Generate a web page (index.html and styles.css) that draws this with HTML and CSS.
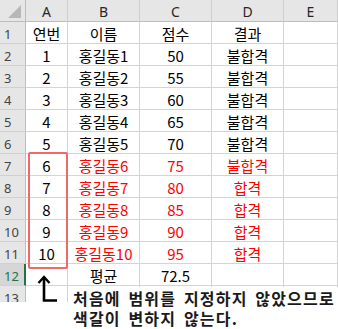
FILE: index.html
```html
<!DOCTYPE html>
<html lang="ko">
<head>
<meta charset="utf-8">
<link rel="stylesheet" href="styles.css">
</head>
<body>
<div class="page">
  <div class="sheet">
    <div class="corner"><span class="tri"></span></div>
    <div class="ch">A</div><div class="ch">B</div><div class="ch">C</div><div class="ch">D</div><div class="ch">E</div>

    <div class="rh">1</div><div class="c">연번</div><div class="c">이름</div><div class="c">점수</div><div class="c">결과</div><div class="c"></div>
    <div class="rh">2</div><div class="c">1</div><div class="c">홍길동1</div><div class="c">50</div><div class="c">불합격</div><div class="c"></div>
    <div class="rh">3</div><div class="c">2</div><div class="c">홍길동2</div><div class="c">55</div><div class="c">불합격</div><div class="c"></div>
    <div class="rh">4</div><div class="c">3</div><div class="c">홍길동3</div><div class="c">60</div><div class="c">불합격</div><div class="c"></div>
    <div class="rh">5</div><div class="c">4</div><div class="c">홍길동4</div><div class="c">65</div><div class="c">불합격</div><div class="c"></div>
    <div class="rh">6</div><div class="c">5</div><div class="c">홍길동5</div><div class="c">70</div><div class="c">불합격</div><div class="c"></div>
    <div class="rh">7</div><div class="c">6</div><div class="c red">홍길동6</div><div class="c red">75</div><div class="c red">불합격</div><div class="c"></div>
    <div class="rh">8</div><div class="c">7</div><div class="c red">홍길동7</div><div class="c red">80</div><div class="c red">합격</div><div class="c"></div>
    <div class="rh">9</div><div class="c">8</div><div class="c red">홍길동8</div><div class="c red">85</div><div class="c red">합격</div><div class="c"></div>
    <div class="rh">10</div><div class="c">9</div><div class="c red">홍길동9</div><div class="c red">90</div><div class="c red">합격</div><div class="c"></div>
    <div class="rh">11</div><div class="c">10</div><div class="c red">홍길동10</div><div class="c red">95</div><div class="c red">합격</div><div class="c"></div>
    <div class="rh active">12</div><div class="c"></div><div class="c">평균</div><div class="c">72.5</div><div class="c"></div><div class="c"></div>
    <div class="rh">13</div><div class="c"></div><div class="c"></div><div class="c"></div><div class="c"></div><div class="c"></div>
  </div>

  <div class="mark"></div>
  <svg class="arrow" width="24" height="28" viewBox="0 0 24 28">
    <path d="M8 2 V25.5 H21" fill="none" stroke="#000" stroke-width="2.6"/>
    <path d="M2.5 8 L8 2 L13.5 8" fill="none" stroke="#000" stroke-width="2.4"/>
  </svg>
  <div class="note">처음에 범위를 지정하지 않았으므로<br>색갈이 변하지 않는다.</div>
</div>
</body>
</html>
```

FILE: styles.css
```css
html, body {
  margin: 0;
  padding: 0;
  background: #fff;
}

.page {
  position: relative;
  width: 338px;
  height: 329px;
  overflow: hidden;
}

.sheet {
  display: grid;
  grid-template-columns: 26px 42px 72px 72px 72px 1fr;
  grid-auto-rows: 22px;
  height: 302px;
  overflow: hidden;
  font-family: "Noto Sans CJK KR", "Noto Sans", sans-serif;
}

.sheet > div {
  box-sizing: border-box;
}

.corner {
  background: #e6e6e6;
  border-right: 1px solid #bdbdbd;
  border-bottom: 1px solid #bdbdbd;
  display: flex;
  align-items: flex-end;
  justify-content: flex-end;
  padding: 0 4px 3px 0;
}

.tri {
  width: 0;
  height: 0;
  border-style: solid;
  border-width: 0 0 13px 13px;
  border-color: transparent transparent #b7b7b7 transparent;
}

.ch {
  background: #e6e6e6;
  border-right: 1px solid #d0d0d0;
  border-bottom: 1px solid #bdbdbd;
  display: flex;
  align-items: center;
  justify-content: center;
  font-family: "Noto Sans", "Liberation Sans", sans-serif;
  font-size: 14px;
  color: #262626;
  padding-top: 1px;
}

.rh {
  background: #e6e6e6;
  border-right: 1px solid #bdbdbd;
  border-bottom: 1px solid #d0d0d0;
  display: flex;
  align-items: center;
  padding: 2px 0 0 4px;
  font-family: "Noto Sans", "Liberation Sans", sans-serif;
  font-size: 13px;
  color: #444;
}

.rh.active {
  background: #d6d6d6;
  color: #217346;
  border-right: 2px solid #217346;
}

.c {
  border-right: 1px solid #d4d4d4;
  border-bottom: 1px solid #d4d4d4;
  display: flex;
  align-items: center;
  justify-content: center;
  padding-top: 3px;
  font-size: 15px;
  line-height: 18px;
  color: #000;
  white-space: nowrap;
}

.c.red {
  color: #ff0000;
}

.mark {
  position: absolute;
  left: 28px;
  top: 152px;
  width: 40px;
  height: 117px;
  box-sizing: border-box;
  border: 2px solid #f06868;
  border-radius: 2px;
}

.arrow {
  position: absolute;
  left: 36px;
  top: 275px;
}

.note {
  position: absolute;
  left: 70px;
  top: 287px;
  right: 0;
  bottom: 0;
  background: #fff;
  padding: 1px 0 0 3px;
  font-family: "Noto Sans CJK KR", "Noto Sans", sans-serif;
  font-weight: bold;
  font-size: 16px;
  line-height: 20px;
  color: #1a1a1a;
  letter-spacing: 1.2px;
  word-spacing: 2px;
  white-space: nowrap;
}
```
